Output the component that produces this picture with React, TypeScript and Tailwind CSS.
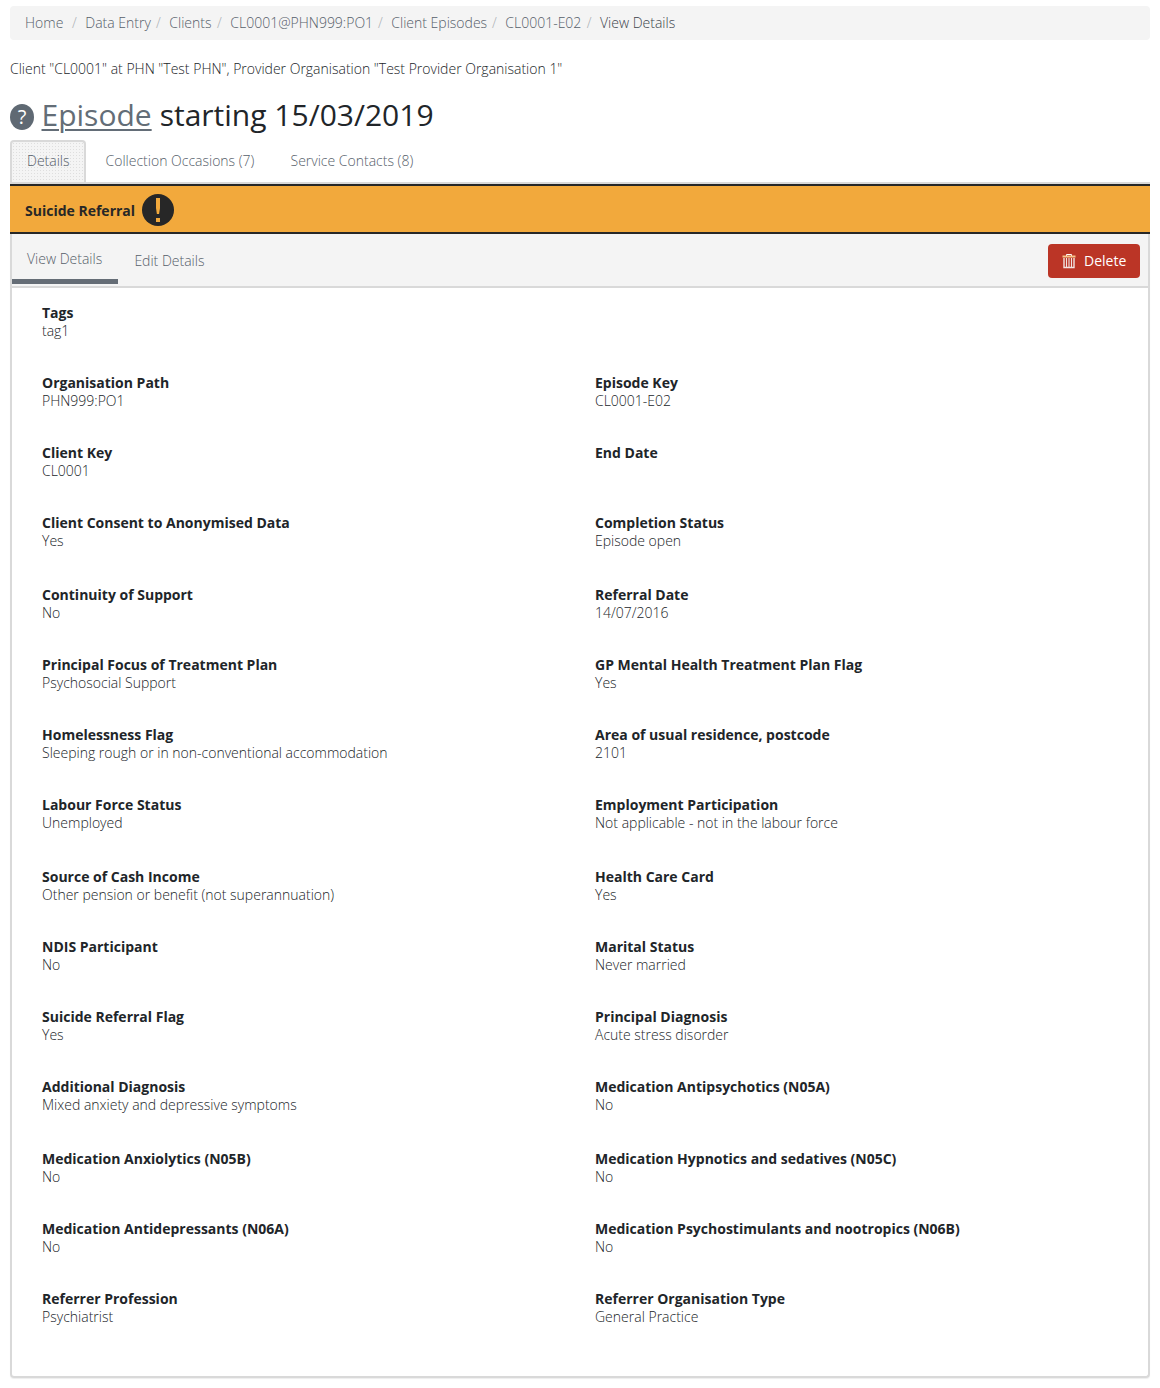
import React from "react";

const crumbs = [
  { text: "Home", box: "w-[60.3px]" },
  { text: "Data Entry", box: "w-[84px]" },
  { text: "Clients", box: "w-[61px]" },
  { text: "CL0001@PHN999:PO1", box: "w-[161px]" },
  { text: "Client Episodes", box: "w-[114px]" },
  { text: "CL0001-E02", box: "w-[94.7px]" },
];

type Field = [string, string] | null;

const rows: [Field, Field][] = [
  [["Tags", "tag1"], null],
  [["Organisation Path", "PHN999:PO1"], ["Episode Key", "CL0001-E02"]],
  [["Client Key", "CL0001"], ["End Date", ""]],
  [["Client Consent to Anonymised Data", "Yes"], ["Completion Status", "Episode open"]],
  [["Continuity of Support", "No"], ["Referral Date", "14/07/2016"]],
  [["Principal Focus of Treatment Plan", "Psychosocial Support"], ["GP Mental Health Treatment Plan Flag", "Yes"]],
  [["Homelessness Flag", "Sleeping rough or in non-conventional accommodation"], ["Area of usual residence, postcode", "2101"]],
  [["Labour Force Status", "Unemployed"], ["Employment Participation", "Not applicable - not in the labour force"]],
  [["Source of Cash Income", "Other pension or benefit (not superannuation)"], ["Health Care Card", "Yes"]],
  [["NDIS Participant", "No"], ["Marital Status", "Never married"]],
  [["Suicide Referral Flag", "Yes"], ["Principal Diagnosis", "Acute stress disorder"]],
  [["Additional Diagnosis", "Mixed anxiety and depressive symptoms"], ["Medication Antipsychotics (N05A)", "No"]],
  [["Medication Anxiolytics (N05B)", "No"], ["Medication Hypnotics and sedatives (N05C)", "No"]],
  [["Medication Antidepressants (N06A)", "No"], ["Medication Psychostimulants and nootropics (N06B)", "No"]],
  [["Referrer Profession", "Psychiatrist"], ["Referrer Organisation Type", "General Practice"]],
];

function FieldCell({ field }: { field: Field }) {
  return (
    <div className="w-[553px] shrink-0 whitespace-nowrap leading-[18px]">
      {field && (
        <>
          <div className="font-bold text-[#212529]">{field[0]}</div>
          <div>{field[1]}</div>
        </>
      )}
    </div>
  );
}

function TrashIcon() {
  return (
    <svg width="14" height="16" viewBox="0 0 14 16" fill="none" className="shrink-0">
      <path d="M4.5 3V1.5h5V3" stroke="#fff" strokeWidth="1" />
      <path d="M.5 3.5h13" stroke="#f6c78c" strokeWidth="2" />
      <path d="M2 5v9.5h10V5" stroke="#f1e4e2" strokeWidth="1.4" />
      <path d="M4.5 5v9M7 5v9M9.5 5v9" stroke="#f1e4e2" strokeWidth="1.1" />
    </svg>
  );
}

export default function App() {
  return (
    <div className="h-[1388px] w-[1160px] overflow-hidden bg-white px-[10px] pt-[6px] font-['Open_Sans',sans-serif] text-[14px] font-light text-[#212529]">
      <nav className="flex h-[34px] items-center whitespace-nowrap rounded-[4px] bg-[#f4f4f4] pb-[2px] pl-[15px] text-[#56606a]">
        {crumbs.map((c) => (
          <div key={c.text} className={"flex shrink-0 justify-between " + c.box}>
            <span>{c.text}</span>
            <span className="mr-[8.5px] text-[#a9aeb3]">/</span>
          </div>
        ))}
        <span className="text-[#3c444c]">View Details</span>
      </nav>

      <p className="mt-[19px] h-[20px] leading-[20px]">
        Client "CL0001" at PHN "Test PHN", Provider Organisation "Test Provider Organisation 1"
      </p>

      <h1 className="mt-[16px] flex h-[40px] items-center whitespace-nowrap text-[30px] font-normal leading-[40px] text-[#212529]">
        <span className="mr-[7.5px] mt-[3px] flex h-[26px] w-[24px] items-center justify-center rounded-[50%] bg-[#5f6973] text-[20px] leading-none text-white">
          ?
        </span>
        <span className="mr-[8px] text-[#636d77] underline decoration-2 underline-offset-[3px]">Episode</span>
        <span>starting 15/03/2019</span>
      </h1>

      <div className="mt-[5px] flex h-[42px] text-[#56606a]">
        <div className="h-[42px] w-[76px] rounded-t-[4px] border-2 border-b-0 border-[#d9d9d9] bg-[#f4f4f4] bg-[radial-gradient(#dedede_0.7px,transparent_0.8px)] bg-[size:3px_3px] pl-[15px] leading-[38px]">
          Details
        </div>
        <div className="ml-[19.5px] w-[185px] leading-[42px]">Collection Occasions (7)</div>
        <div className="leading-[42px]">Service Contacts (8)</div>
      </div>
      <div className="h-[2px] bg-[#d9d9d9]" />

      <div className="flex h-[50px] items-center border-y-2 border-[#272727] bg-[#f2a93c] pl-[15px] font-bold text-[#272727]">
        <span className="w-[117px] pt-[2px]">Suicide Referral</span>
        <svg width="32" height="32" viewBox="0 0 32 32" className="mt-[2px]">
          <circle cx="16" cy="16" r="16" fill="#272727" />
          <path d="M14 4h4v10l-.9 6h-2.2l-.9-6z" fill="#f2a93c" />
          <rect x="14" y="24" width="4" height="4" fill="#f2a93c" />
        </svg>
      </div>

      <div className="h-[1144px] overflow-hidden rounded-b-[4px] border-2 border-t-0 border-[#d9d9d9] shadow-[0_1px_1px_#eeeeee]">
        <div className="flex h-[54px] border-b-2 border-[#d9d9d9] bg-[#f4f4f4] text-[#56606a]">
          <div className="h-[50px] w-[106px] border-b-[5px] border-[#656d76] pl-[15px] leading-[50px]">View Details</div>
          <div className="ml-[16.4px] leading-[54px]">Edit Details</div>
          <button className="ml-auto mr-[8px] mt-[10px] flex h-[34px] w-[92px] items-center rounded-[4px] bg-[#bb3526] pl-[14px] font-normal text-white">
            <TrashIcon />
            <span className="ml-[8px] pb-[2px]">Delete</span>
          </button>
        </div>
        <div className="pl-[30px] pt-[16px]">
          {rows.map(([left, right], i) => (
            <div key={i} className={i % 4 === 3 ? "flex h-[72px]" : "flex h-[70px]"}>
              <FieldCell field={left} />
              <FieldCell field={right} />
            </div>
          ))}
        </div>
      </div>
    </div>
  );
}
